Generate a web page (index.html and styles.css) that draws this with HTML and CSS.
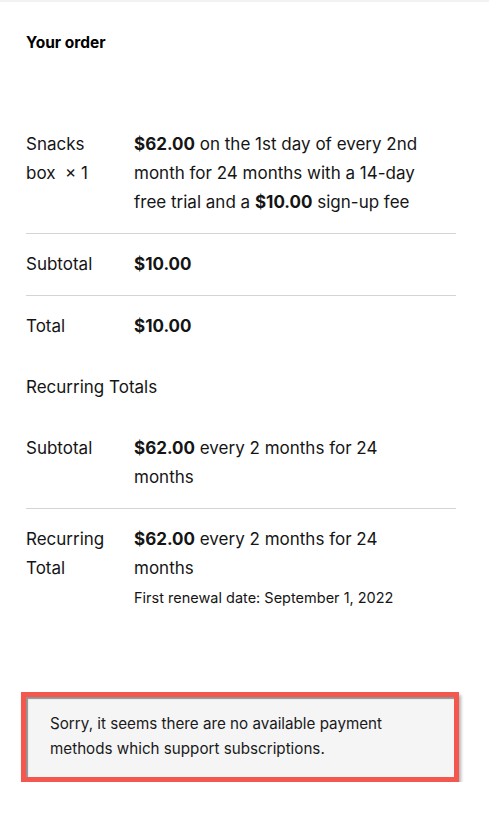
FILE: index.html
```html
<!DOCTYPE html>
<html lang="en">
<head>
<meta charset="utf-8">
<title>Your order</title>
<link rel="stylesheet" href="styles.css">
</head>
<body>
<div class="topline"></div>
<main class="page">
  <h3 class="heading">Your order</h3>
  <div class="table">
    <div class="row bordered">
      <div class="label narrow">Snacks box&nbsp; <span class="qty">×&nbsp;1</span></div>
      <div class="value"><strong>$62.00</strong> on the 1st day of every 2nd month for 24 months with a 14-day free trial and a <strong>$10.00</strong> sign-up fee</div>
    </div>
    <div class="row bordered">
      <div class="label">Subtotal</div>
      <div class="value"><strong>$10.00</strong></div>
    </div>
    <div class="row">
      <div class="label">Total</div>
      <div class="value"><strong>$10.00</strong></div>
    </div>
    <div class="row">
      <div class="label wide">Recurring Totals</div>
    </div>
    <div class="row bordered">
      <div class="label">Subtotal</div>
      <div class="value"><strong>$62.00</strong> every 2 months for 24 months</div>
    </div>
    <div class="row">
      <div class="label">Recurring Total</div>
      <div class="value"><strong>$62.00</strong> every 2 months for 24 months
        <div class="renewal">First renewal date: September 1, 2022</div>
      </div>
    </div>
  </div>
  <div class="notice">
    <p>Sorry, it seems there are no available payment methods which support subscriptions.</p>
  </div>
</main>
</body>
</html>
```
FILE: styles.css
```css
html, body {
  margin: 0;
  padding: 0;
  background: #ffffff;
}
body {
  font-family: Inter, "Noto Sans", "Liberation Sans", sans-serif;
  color: #151515;
}
.topline {
  height: 2px;
  background: #f2f2f2;
}
.page {
  padding: 0 33px 0 26px;
}
.heading {
  margin: 0;
  padding-top: 32px;
  font-size: 15.5px;
  line-height: 18px;
  font-weight: 700;
  color: #000;
}
.table {
  margin-top: 62px;
}
.row {
  display: flex;
  padding: 16px 0;
  font-size: 17px;
  line-height: 29px;
}
.row.bordered {
  border-bottom: 1px solid #d4d4d4;
}
.label {
  width: 108px;
  flex: none;
  box-sizing: border-box;
  padding-right: 18px;
}
.label.wide {
  width: auto;
}
.value {
  flex: 1;
  padding-right: 26px;
}
.value strong {
  font-weight: 700;
}
.renewal {
  margin-top: 4px;
  font-size: 14.5px;
  line-height: 22px;
}
.notice {
  margin: 67px -3px 0 -5px;
  border: 5px solid #f4574d;
  background: #f5f5f5;
  box-shadow: 2px 3px 3px rgba(0, 0, 0, 0.3), inset 2px 2px 1px rgba(0, 0, 0, 0.4);
  padding: 14px 24px 16px;
}
.notice p {
  margin: 0;
  font-size: 15.2px;
  line-height: 25px;
  color: #1a1a1a;
}
```
